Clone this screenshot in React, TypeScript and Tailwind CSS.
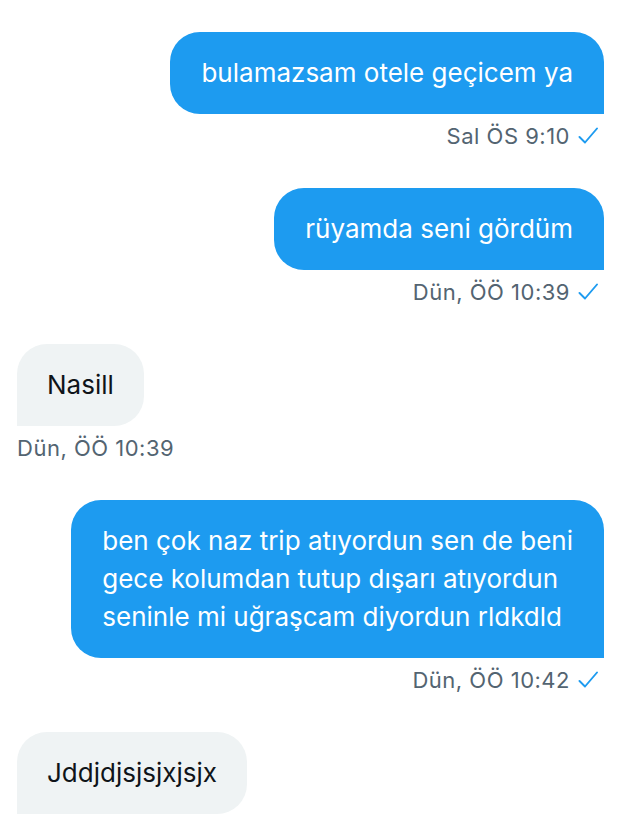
const font = { fontFamily: 'Inter, "Noto Sans", sans-serif' }

function Check() {
  return (
    <svg width="20" height="20" viewBox="0 0 20 20" className="ml-[8px]">
      <path d="M1.5 11 L7 16.5 L19 2.5" fill="none" stroke="#1d9bf0" strokeWidth="1.9" strokeLinecap="round" strokeLinejoin="round" />
    </svg>
  )
}

function Sent({ lines, time }: { lines: string[]; time: string }) {
  return (
    <div className="flex flex-col items-end">
      <div className="max-w-[548px] rounded-[30px] rounded-br-none bg-[#1d9bf0] px-[31px] py-[22px] text-[26px] leading-[38px] text-white">
        {lines.map((l, i) => (
          <div key={i}>{l}</div>
        ))}
      </div>
      <div className="mt-[8px] mr-[6px] flex h-[28px] items-center text-[22px] tracking-[0.5px] text-[#536471]">
        <span>{time}</span>
        <Check />
      </div>
    </div>
  )
}

function Received({ text, time }: { text: string; time?: string }) {
  return (
    <div className="flex flex-col items-start">
      <div className="rounded-[30px] rounded-bl-none bg-[#eff3f4] px-[30px] py-[22px] text-[26px] leading-[38px] text-[#0f1419]">
        {text}
      </div>
      {time && (
        <div className="mt-[8px] flex h-[28px] items-center text-[22px] tracking-[0.5px] text-[#536471]">{time}</div>
      )}
    </div>
  )
}

export default function App() {
  return (
    <div className="h-[815px] w-[635px] overflow-hidden bg-white pl-[17px] pr-[31px] pt-[32px]" style={font}>
      <div className="flex flex-col gap-[38px]">
        <Sent lines={['bulamazsam otele geçicem ya']} time="Sal ÖS 9:10" />
        <Sent lines={['rüyamda seni gördüm']} time="Dün, ÖÖ 10:39" />
        <Received text="Nasill" time="Dün, ÖÖ 10:39" />
        <Sent
          lines={[
            'ben çok naz trip atıyordun sen de beni',
            'gece kolumdan tutup dışarı atıyordun',
            'seninle mi uğraşcam diyordun rldkdld',
          ]}
          time="Dün, ÖÖ 10:42"
        />
        <Received text="Jddjdjsjsjxjsjx" />
      </div>
    </div>
  )
}
